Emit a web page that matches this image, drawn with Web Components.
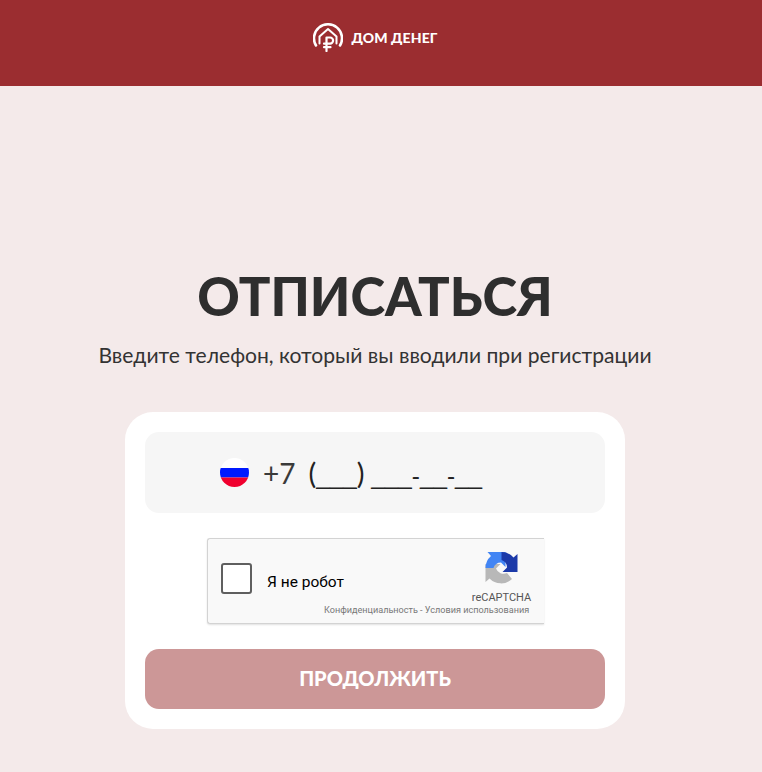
<!DOCTYPE html>
<html lang="ru">
<head>
<meta charset="utf-8">
<title>Отписаться</title>
<style>
html, body { margin: 0; padding: 0; background: #f4eaea; overflow: hidden; }
body { font-family: "Lato", "Noto Sans", sans-serif; color: #2e2e2e; }
</style>
</head>
<body>
<site-header></site-header>
<unsubscribe-page>
  <phone-field></phone-field>
  <fake-captcha></fake-captcha>
  <submit-button>ПРОДОЛЖИТЬ</submit-button>
</unsubscribe-page>

<script>
class SiteHeader extends HTMLElement {
    constructor() {
        super();
        this.attachShadow({ mode: 'open' }).innerHTML = `
<style>
:host { display: flex; justify-content: center; align-items: center; height: 86px; width: 750px; box-shadow: 12px 0 0 #9b2d30; background: #9b2d30; }
.logo { display: flex; align-items: center; gap: 8px; margin: -11px 0 0 1px; color: #fff; }
span { font: 900 14px "Lato", sans-serif; letter-spacing: .1px; }
svg { display: block; }
</style>
<div class="logo">
  <svg width="30" height="29" viewBox="0 0 30 29" fill="none" stroke="#fff" stroke-linecap="round" stroke-linejoin="round">
    <path d="M3 22.500 A14 14 0 1 1 27 22.500" stroke-width="2.600"/>
    <path d="M6.500 20.500 V13.500 L15 6 L23.500 13.500 V20.500" stroke-width="2"/>
    <path d="M13.500 28 V14.500 H17 A3.100 3.100 0 0 1 17 20.700 H11 M11 24.200 H17.500" stroke-width="2.200"/>
  </svg>
  <span>ДОМ ДЕНЕГ</span>
</div>`;
    }
}

class UnsubscribePage extends HTMLElement {
    constructor() {
        super();
        this.attachShadow({ mode: 'open' }).innerHTML = `
<style>
:host { display: flex; flex-direction: column; align-items: center; width: 750px; padding-top: 176px; }
h1 { margin: -1px 0 0; font: 900 52.500px/70px "Lato", sans-serif; color: #2e2e2e; letter-spacing: 0; }
p { margin: 9px 0 0; font: 400 21.100px/30px "Lato", sans-serif; color: #333; }
.card { box-sizing: border-box; width: 500px; height: 317px; margin-top: 42px; padding: 20px; background: #fff; border-radius: 28px; display: flex; flex-direction: column; align-items: center; }
</style>
<h1>ОТПИСАТЬСЯ</h1>
<p>Введите телефон, который вы вводили при регистрации</p>
<div class="card"><slot></slot></div>`;
    }
}

class PhoneField extends HTMLElement {
    constructor() {
        super();
        this.attachShadow({ mode: 'open' }).innerHTML = `
<style>
:host { display: flex; align-items: center; box-sizing: border-box; width: 460px; height: 81px; padding-left: 75px; background: #f6f6f6; border-radius: 14px; color: #3a3a3a; font: 400 28px "Lato", sans-serif; }
svg { display: block; margin-right: 14px; }
.code { margin-right: 14px; }
.mask { font: 400 24.300px "Liberation Sans", sans-serif; color: #222; white-space: pre; margin-left: -1px; }
.mask i { font: normal 400 29px "Lato", sans-serif; }
</style>
<svg width="29" height="29" viewBox="0 0 29 29">
  <defs><clipPath id="c"><circle cx="14.500" cy="14.500" r="14.500"/></clipPath></defs>
  <g clip-path="url(#c)">
    <rect width="29" height="10" fill="#fff"/>
    <rect y="10" width="29" height="9.500" fill="#0019ff"/>
    <rect y="19.500" width="29" height="9.500" fill="#f0002e"/>
  </g>
</svg>
<span class="code">+7</span>
<span class="mask"><i>(</i>___<i>)</i> ___-__-__</span>`;
    }
}

class FakeCaptcha extends HTMLElement {
    constructor() {
        super();
        this.attachShadow({ mode: 'open' }).innerHTML = `
<style>
:host { display: flex; box-sizing: border-box; width: 337px; height: 86px; margin: 25px 0 0 1px; background: #f9f9f9; border: 1px solid #d3d3d3; border-right: 0; border-radius: 3px 0 0 3px; box-shadow: 0 1px 2px rgba(0,0,0,.12); font-family: Roboto, sans-serif; color: #000; position: relative; }
.box { box-sizing: border-box; width: 31px; height: 31px; margin: 24px 0 0 13px; background: #fff; border: 2px solid #5f5f5f; border-radius: 3px; flex: none; }
.label { font-size: 15.500px; margin: 34px 0 0 15px; line-height: 18px; }
.brand { position: absolute; left: 258.500px; top: 13px; width: 70px; display: flex; flex-direction: column; align-items: center; font-size: 11px; line-height: 13px; color: #555; }
.brand svg { display: block; margin-bottom: 7px; }
.links { position: absolute; left: 116px; top: 66px; font-size: 9.100px; line-height: 10px; color: #777; white-space: nowrap; }
</style>
<div class="box"></div>
<div class="label">Я не робот</div>
<div class="brand">
  <svg width="33" height="32" viewBox="0 0 32 32">
    <path d="M26.500 27 A16 16 0 0 1 4 26.500 L0 30 V12 H15 L10.500 16.500 A8 8 0 0 0 21.500 21 Z" fill="#b8b8b8"/>
    <path d="M0 16 A16 16 0 0 1 5.500 4 L2 0 H20 V15 L15.500 10.500 A8 8 0 0 0 8 16 Z" fill="#4285f4"/>
    <path d="M16 0 A16 16 0 0 1 28 5.500 L32 2 V20 H17 L21.500 15.500 A8 8 0 0 0 16 8 Z" fill="#1c3aa9"/>
  </svg>
  <span>reCAPTCHA</span>
</div>
<div class="links">Конфиденциальность - Условия использования</div>`;
    }
}

class SubmitButton extends HTMLElement {
    constructor() {
        super();
        this.attachShadow({ mode: 'open' }).innerHTML = `
<style>
:host { display: flex; justify-content: center; align-items: center; box-sizing: border-box; width: 460px; height: 60px; margin-top: 25px; padding-bottom: 3px; background: #cc9797; border-radius: 14px; color: #fff; font: 900 20px "Lato", sans-serif; cursor: pointer; }
</style>
<slot></slot>`;
    }
}

customElements.define('site-header', SiteHeader);
customElements.define('unsubscribe-page', UnsubscribePage);
customElements.define('phone-field', PhoneField);
customElements.define('fake-captcha', FakeCaptcha);
customElements.define('submit-button', SubmitButton);
</script>
</body>
</html>
